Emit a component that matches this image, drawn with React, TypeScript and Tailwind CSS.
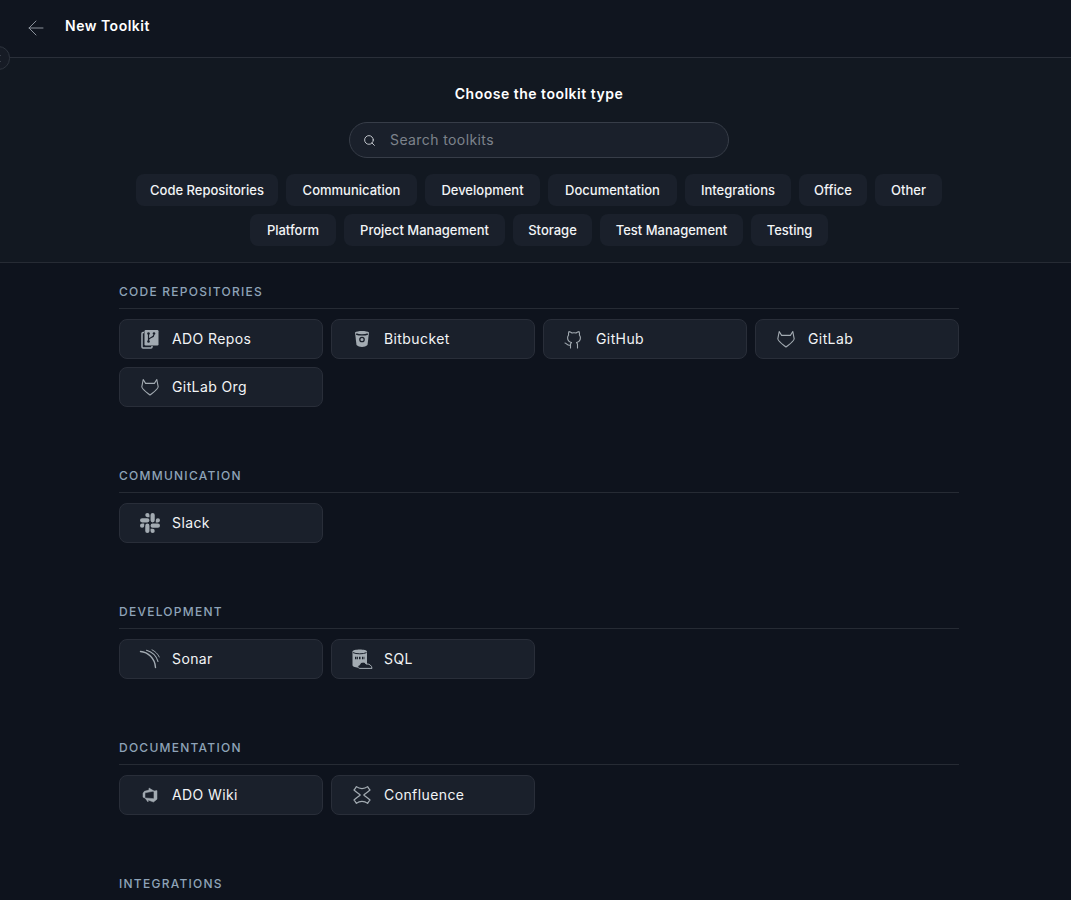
import { ArrowLeft, Search } from "lucide-react";
import { SiSlack } from "react-icons/si";
import { VscAzureDevops } from "react-icons/vsc";
import type { ReactNode } from "react";

const font = "font-['Inter','Open_Sans',sans-serif]";

const row1 = [
  { label: "Code Repositories", width: "w-[142px]" },
  { label: "Communication", width: "w-[131px]" },
  { label: "Development", width: "w-[115px]" },
  { label: "Documentation", width: "w-[129px]" },
  { label: "Integrations", width: "w-[106px]" },
  { label: "Office", width: "w-[68px]" },
  { label: "Other", width: "w-[67px]" },
];
const row2 = [
  { label: "Platform", width: "w-[86px]" },
  { label: "Project Management", width: "w-[161px]" },
  { label: "Storage", width: "w-[79px]" },
  { label: "Test Management", width: "w-[143px]" },
  { label: "Testing", width: "w-[77px]" },
];

function Icon({ children }: { children: ReactNode }) {
  return (
    <svg width="20" height="20" viewBox="0 0 20 20" fill="none" className="shrink-0 overflow-visible text-[#a3abb2]">
      {children}
    </svg>
  );
}

const adoRepos = (
  <Icon>
    <path d="M4 3.5 H3 a1 1 0 0 0 -1 1 V18 a1 1 0 0 0 1 1 H11 a1 1 0 0 0 1 -1 V17" stroke="currentColor" strokeWidth="1.5" />
    <rect x="4.5" y="1" width="14" height="15.5" rx="1.2" fill="currentColor" />
    <circle cx="8.5" cy="4.5" r="1.3" fill="#1a202b" />
    <circle cx="8.5" cy="12.5" r="1.3" fill="#1a202b" />
    <circle cx="14" cy="4.5" r="1.3" fill="#1a202b" />
    <path d="M8.5 5 V12 M14 5.5 C14 9 9 8 8.5 11" stroke="#1a202b" strokeWidth="1.2" />
  </Icon>
);

const bitbucket = (
  <Icon>
    <path d="M3 3.5 C5 1.5 15 1.5 17 3.5 L15.5 16 C13 18.5 7 18.5 4.5 16 Z" fill="currentColor" />
    <path d="M4.2 5 C7 6.2 13 6.2 15.8 5" stroke="#1a202b" strokeWidth="1.4" />
    <circle cx="10" cy="10.5" r="2.2" stroke="#1a202b" strokeWidth="1.3" />
  </Icon>
);

const github = (
  <Icon>
    <path
      d="M6.5 19 V15.5 C6.5 14.6 7 14 7.5 13.5 C5 13 3.6 11.6 3.6 8.8 C3.6 7.6 4 6.8 4.6 6 C4.4 5 4.4 3.8 4.9 2.6 C6 2.6 7 3.2 8 4 C9.2 3.7 10.8 3.7 12 4 C13 3.2 14 2.6 15.1 2.6 C15.6 3.8 15.6 5 15.4 6 C16 6.8 16.4 7.6 16.4 8.8 C16.4 11.6 15 13 12.5 13.5 C13 14 13.5 14.6 13.5 15.5 V19 M6.5 16 C3.5 17 3 14.5 1 14"
      stroke="currentColor"
      strokeWidth="1.1"
      strokeLinecap="round"
      strokeLinejoin="round"
    />
  </Icon>
);

const gitlab = (
  <Icon>
    <path
      d="M3.2 2.5 L5.6 6.4 H14.4 L16.8 2.5 L18.2 9.8 C18 12.5 12.5 16 10 18 C7.5 16 2 12.5 1.8 9.8 Z"
      stroke="currentColor"
      strokeWidth="1.1"
      strokeLinejoin="round"
    />
  </Icon>
);

const slack = <SiSlack size={20} className="shrink-0 text-[#a3abb2]" />;

const sonar = (
  <Icon>
    <g stroke="currentColor" strokeLinecap="round" fill="none">
      <path d="M0.5 2.5 C8 3 15 9.5 15.5 18.5" strokeWidth="1.4" />
      <path d="M6.5 1.2 C12 2.8 16.5 7 18 12.5" strokeWidth="1.1" />
      <path d="M12 0.8 C15 2.2 18 5 19.3 8" strokeWidth="0.9" />
    </g>
  </Icon>
);

const sql = (
  <Icon>
    <path d="M0.5 2.5 C0.5 -0.3 15 -0.3 15 2.5 V16 C15 18 10 18.5 7.5 18.5 C4 18.5 0.5 18 0.5 16 Z" fill="currentColor" />
    <path d="M1 3.6 C4 5.2 11.5 5.2 14.5 3.6" stroke="#1a202b" strokeWidth="1" />
    <path d="M3 9 H6 M7 9 H9 M10 9 H12.5" stroke="#1a202b" strokeWidth="2.4" strokeDasharray="1.5 0.6" />
    <path
      d="M8 19.4 C5.5 19.4 5 16.4 7.5 16 C8 12.6 13 12.2 14 15 C17 14.5 20 16.5 20 19.4 Z"
      fill="#1a202b"
      stroke="currentColor"
      strokeWidth="1"
    />
  </Icon>
);

const adoWiki = (
  <span className="flex h-5 w-5 shrink-0 items-center justify-center">
    <VscAzureDevops size={16} className="text-[#a3abb2] [stroke-width:0.5px]" />
  </span>
);

const confluence = (
  <Icon>
    <path
      d="M2 5 C3 4 3.6 3 4.4 1.6 C7.6 4.2 12.4 4.2 15.6 1.6 C16.4 3 17 4 18 5 C15.5 7.4 13 8.8 11.8 10 C13 11.2 15.5 12.6 18 15 C17 16 16.4 17 15.6 18.4 C12.4 15.8 7.6 15.8 4.4 18.4 C3.6 17 3 16 2 15 C4.5 12.6 7 11.2 8.2 10 C7 8.8 4.5 7.4 2 5 Z"
      stroke="currentColor"
      strokeWidth="1.2"
      strokeLinejoin="round"
    />
  </Icon>
);

const sections: { title: string; items: { name: string; icon: ReactNode }[] }[] = [
  {
    title: "CODE REPOSITORIES",
    items: [
      { name: "ADO Repos", icon: adoRepos },
      { name: "Bitbucket", icon: bitbucket },
      { name: "GitHub", icon: github },
      { name: "GitLab", icon: gitlab },
      { name: "GitLab Org", icon: gitlab },
    ],
  },
  { title: "COMMUNICATION", items: [{ name: "Slack", icon: slack }] },
  {
    title: "DEVELOPMENT",
    items: [
      { name: "Sonar", icon: sonar },
      { name: "SQL", icon: sql },
    ],
  },
  {
    title: "DOCUMENTATION",
    items: [
      { name: "ADO Wiki", icon: adoWiki },
      { name: "Confluence", icon: confluence },
    ],
  },
  { title: "INTEGRATIONS", items: [] },
];

function Pill({ label, width }: { label: string; width: string }) {
  return (
    <button className={`h-8 rounded-lg bg-[#1a202b] text-center text-[13px] font-medium leading-8 text-[#f2f4f6] ${width}`}>
      {label}
    </button>
  );
}

export default function App() {
  return (
    <div className={`relative h-[900px] overflow-hidden bg-[#0e131d] ${font}`}>
      <div className="h-[58px] border-b border-[#2a2f39] bg-[#10151f]">
        <div className="flex items-start gap-[17px] pl-6 pt-4">
          <ArrowLeft size={24} strokeWidth={1} className="text-[#8b929b]" />
          <span className="mt-px text-sm font-semibold leading-[18px] tracking-[0.5px] text-white">New Toolkit</span>
        </div>
      </div>
      <div className="absolute left-[-13px] top-[46px] flex h-[24px] w-[23px] items-center justify-end rounded-full border border-[#2e343e] bg-[#161b25] pr-2">
        <span className="h-[7px] w-px border-y border-[#3a404a]" />
      </div>

      <div className="h-[205px] border-b border-[#262b34] bg-[#121821] pl-[7px] pt-[27px]">
        <h1 className="text-center text-sm font-semibold leading-[18px] tracking-[0.5px] text-white">
          Choose the toolkit type
        </h1>
        <div className="mx-auto mt-[19px] flex h-9 w-[380px] items-center gap-[14px] rounded-full border border-[#373d48] bg-[#1a202b] pl-[13px]">
          <Search size={13} strokeWidth={1.75} className="text-[#c8ccd1]" />
          <span className="text-sm tracking-[0.4px] text-[#7d838b]">Search toolkits</span>
        </div>
        <div className="mt-4 flex justify-center gap-2">
          {row1.map((p) => (
            <Pill key={p.label} label={p.label} width={p.width} />
          ))}
        </div>
        <div className="mt-2 flex justify-center gap-2">
          {row2.map((p) => (
            <Pill key={p.label} label={p.label} width={p.width} />
          ))}
        </div>
      </div>

      <div className="ml-[119px] w-[840px]">
        {sections.map((s) => (
          <section key={s.title} className="pb-[61px] first:pt-[21px]">
            <h2 className="border-b border-[#262b34] pb-[9px] text-xs font-medium leading-[15px] tracking-[1.25px] text-[#8ea3b8]">
              {s.title}
            </h2>
            <div className="mt-[10px] grid grid-cols-4 gap-2">
              {s.items.map((item) => (
                <div
                  key={item.name}
                  className="flex h-10 items-center gap-3 rounded-lg border border-[#292e39] bg-[#1a202b] pl-5"
                >
                  {item.icon}
                  <span className="text-sm tracking-[0.4px] text-[#f2f4f6]">{item.name}</span>
                </div>
              ))}
            </div>
          </section>
        ))}
      </div>
    </div>
  );
}
